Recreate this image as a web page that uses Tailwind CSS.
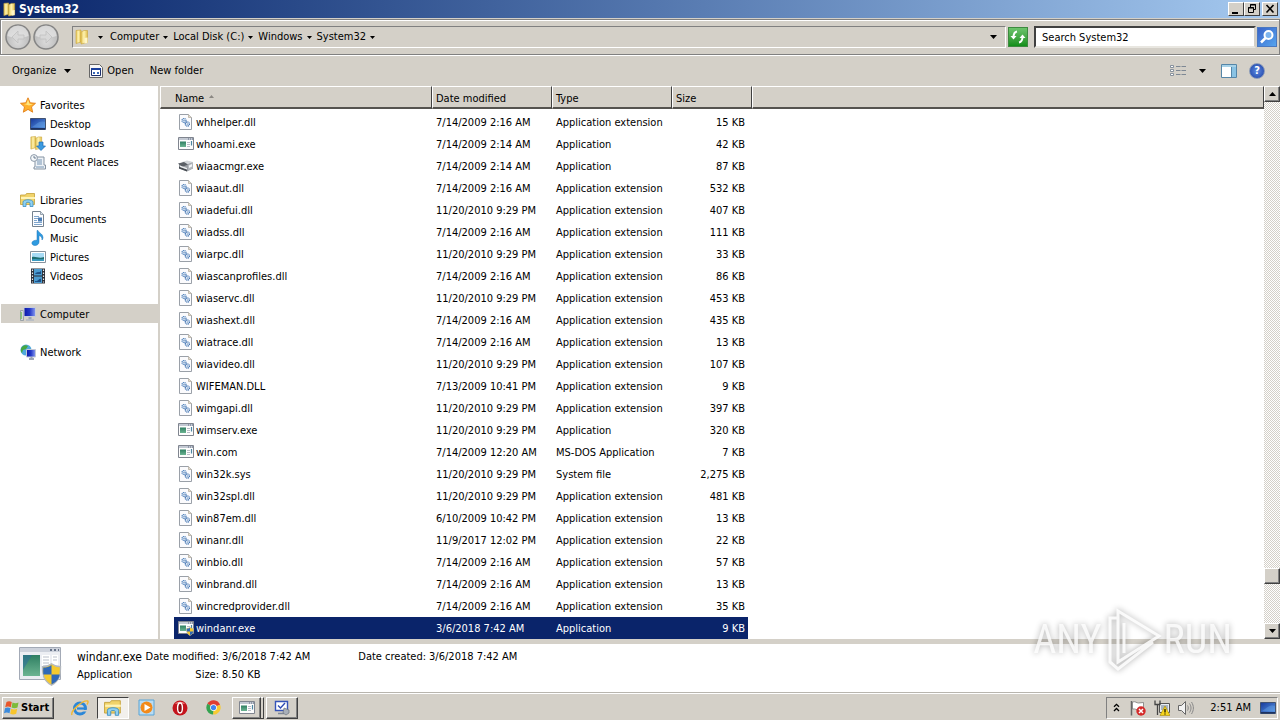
<!DOCTYPE html>
<html lang="en">
<head>
    <meta charset="UTF-8">
    <meta name="viewport" content="width=device-width, initial-scale=1.0">
    <title>System32</title>
    <script src="https://cdn.jsdelivr.net/npm/@tailwindcss/browser@4"></script>
</head>
<body class="h-screen flex flex-col overflow-hidden bg-[#d4d0c8] text-black text-[11px] leading-[14px] font-['DejaVu_Sans_Condensed','DejaVu_Sans',sans-serif]">

    <!-- Shared icons -->
    <svg class="absolute size-0" aria-hidden="true">
        <defs>
            <linearGradient id="g-folder" x1="0" x2="1" y1="0" y2="0"><stop offset="0" stop-color="#e3c355"/><stop offset=".45" stop-color="#fff3b0"/><stop offset="1" stop-color="#e2bf4c"/></linearGradient>
            <linearGradient id="g-blue" x1="0" x2="1" y1="0" y2="1"><stop offset="0" stop-color="#16389a"/><stop offset="1" stop-color="#5b9be6"/></linearGradient>
            <linearGradient id="g-navy" x1="0" x2="1" y1="0" y2="0"><stop offset="0" stop-color="#0a17a8"/><stop offset=".5" stop-color="#2338c8"/><stop offset="1" stop-color="#8a9cf0"/></linearGradient>
            <linearGradient id="g-green" x1="0" x2="0" y1="0" y2="1"><stop offset="0" stop-color="#2f7f62"/><stop offset="1" stop-color="#6cb492"/></linearGradient>
            <radialGradient id="g-round" cx=".5" cy=".7" r=".7"><stop offset="0" stop-color="#dcdcdc"/><stop offset="1" stop-color="#b0b0b0"/></radialGradient>
        </defs>
        <symbol id="arrow-down" viewBox="0 0 7 4"><path d="M0 0h7L3.500 4z" fill="currentColor"/></symbol>
        <symbol id="folder" viewBox="0 0 16 16">
            <path d="M2 1.500l5-.5v12l-5 1.500z" fill="url(#g-folder)" stroke="#c9a53b" stroke-width=".6"/>
            <path d="M7 3l3-1.500h3.500v12L7 15z" fill="url(#g-folder)" stroke="#c9a53b" stroke-width=".6"/>
            <path d="M10.500 9l3-.5V14l-3 .5z" fill="#fff6c8"/>
        </symbol>
        <symbol id="dll" viewBox="0 0 16 16">
            <path d="M1.500.5h9l3 3v12h-12z" fill="#fbfbfd" stroke="#9aa0a8"/>
            <path d="M10.500.5v3h3" fill="#e4dccb" stroke="#b0a898" stroke-width=".7"/>
            <circle cx="6" cy="6.500" r="2" fill="#e5effa" stroke="#4a7db8" stroke-width="1.200" stroke-dasharray="1 .5"/>
            <circle cx="9.300" cy="10" r="2.100" fill="#e5effa" stroke="#3d6fae" stroke-width="1.200" stroke-dasharray="1 .5"/>
            <circle cx="6" cy="6.500" r=".6" fill="#3b68a0"/><circle cx="9.300" cy="10" r=".6" fill="#3b68a0"/>
        </symbol>
        <symbol id="exe" viewBox="0 0 16 16">
            <path d="M.5 1.500h15v12H.5z" fill="#fdfdfd" stroke="#80858f"/>
            <path d="M1 2h14v2H1z" fill="#c3c9d3"/>
            <path d="M10 2.500h1v1h-1zm2 0h1v1h-1zm2 0h1v1h-1z" fill="#5f6a80"/>
            <path d="M2 5.500h6v5.500H2z" fill="url(#g-green)"/>
            <path d="M9 6.500h3M9 8.500h3M9 10.500h3" stroke="#b7bcc5"/>
            <path d="M13.500 5v4.500" stroke="#4c86a2" stroke-width="1.200"/>
        </symbol>
        <symbol id="shield" viewBox="0 0 12 14">
            <path d="M6 .5C8 2 9.500 2.300 11.500 2.300 11.500 8 10.500 11 6 13.500 1.500 11 .5 8 .5 2.300 2.500 2.300 4 2 6 .5z" fill="#f5c92e" stroke="#b3b8bf" stroke-width=".8"/>
            <path d="M6 1.200V7H1C.9 5.500.9 4 1 2.800 3 2.800 4.500 2.300 6 1.200zM6 7h5C10.500 10 9 11.500 6 13z" fill="#2f68b7"/>
        </symbol>
        <symbol id="exe-shield" viewBox="0 0 16 16"><use href="#exe" width="16" height="16"/><use href="#shield" x="8" y="7" width="8" height="9"/></symbol>
        <symbol id="scanner" viewBox="0 0 16 16">
            <path d="M1 6l8-3 6 1.500v6L9 13.500 1 10.500z" fill="#9a9ea4"/>
            <path d="M4 4l5-1.500 6 1.500-6 2.500z" fill="#d3d6da"/>
            <path d="M0 5.500L6 4l4 2.500L4 9z" fill="#5b6066"/>
            <path d="M1 8.500l8 3v2l-8-3z" fill="#474c52"/>
            <path d="M2 7.500l7 2.500v1.500L2 9z" fill="#eceef0"/>
            <path d="M10 7l5-2.500v5.500l-5 3z" fill="#b2b7bc"/><path d="M11 7.500l3-1.500v2.500l-3 1.500z" fill="#f3f5f7"/>
        </symbol>
        <symbol id="star" viewBox="0 0 16 16"><path d="M8 .8l2.200 5 5.300.5-4 3.600 1.200 5.300L8 12.400l-4.700 2.800 1.200-5.300-4-3.600 5.300-.5z" fill="#ffb02c" stroke="#e2801c" stroke-width=".9"/><path d="M8 2.500l1.500 4.200 3.500.5-4 1.300-5-1.500 2.500-.3z" fill="#ffe680"/></symbol>
        <symbol id="desktop" viewBox="0 0 16 16"><path d="M.5 2.500h15v11H.5z" fill="url(#g-blue)" stroke="#415272"/><path d="M1 12h14v1.500H1z" fill="#1d3261"/><path d="M5 9c4-4 8-4 10-3v5H2z" fill="#6fb0ee" opacity=".35"/></symbol>
        <symbol id="downloads" viewBox="0 0 16 16"><use href="#folder" x="-1" width="15" height="16"/><path d="M9 7h4v4h2.500L11 15.500 6.500 11H9z" fill="#3b9ae0" stroke="#1e6cb3" stroke-width=".7"/></symbol>
        <symbol id="recent" viewBox="0 0 16 16">
            <path d="M5 3h9v8h1.500v4H4v-2h1z" fill="#eef2f6" stroke="#8593a2"/>
            <path d="M7 6h5M7 8h5M7 10h5M6 13h8" stroke="#7695b4"/>
            <circle cx="4" cy="4" r="3.400" fill="#f5f8fa" stroke="#8c99a8"/><path d="M4 2v2h2" stroke="#4d6178" fill="none" stroke-width=".8"/>
        </symbol>
        <symbol id="libraries" viewBox="0 0 16 16">
            <path d="M.5 3h5l1-1.500h8v11H.5z" fill="#f1d36a" stroke="#c39f37" stroke-width=".8"/>
            <path d="M1 5h14v2H1z" fill="#fff3b5"/>
            <path d="M3 14.500V10c0-3 10-3 10 0v4.500h-3V11c0-1-4-1-4 0v3.500z" fill="#8fd0f0" stroke="#3c8fc4" stroke-width=".8"/>
        </symbol>
        <symbol id="document" viewBox="0 0 16 16"><path d="M2.500.5h8l3 3v12h-11z" fill="#fcfdff" stroke="#75828f"/><path d="M10.500.5v3h3" fill="#d9e3ee" stroke="#75828f" stroke-width=".7"/><path d="M4 5.500h5M4 7.500h4M4 9.500h3M4 11.500h8M4 13.500h8" stroke="#7fa5cc"/><path d="M8 6.500h4v4H8z" fill="#4a7cb5"/></symbol>
        <symbol id="music" viewBox="0 0 16 16"><path d="M8 .5c1 3 5 3 5 7 0 1-.5 2-1 2.500.3-3-1.500-4-3-4.500V12c0 2-1.800 3.500-4 3.500S1.500 14 2 12.500 4.500 10 7 10.300V.5z" fill="#2f9be0" stroke="#1872b8" stroke-width=".5"/></symbol>
        <symbol id="pictures" viewBox="0 0 16 16"><path d="M.5 2.500h15v11H.5z" fill="#fff" stroke="#87929d"/><path d="M2 4h12v8H2z" fill="#a7dbf5"/><path d="M2 8c4-1 7 2 12 0v4H2z" fill="#1e6f72"/><path d="M2 10.500c4-1.500 8 .5 12-.5v2H2z" fill="#3b9bc0"/></symbol>
        <symbol id="videos" viewBox="0 0 16 16"><path d="M1 .5h14v15H1z" fill="#2a2e36"/><path d="M4 1h8v6.500H4zM4 8.500h8V15H4z" fill="#4a9bd0"/><path d="M5 6c2-3 4-1 6-3v3zM5 13c3 1 4-3 6-2v3H5z" fill="#1d4f85"/><path d="M2.500 1.500v13M13.500 1.500v13" stroke="#e9ecef" stroke-width="1.200" stroke-dasharray="1.500 1.500"/></symbol>
        <symbol id="computer" viewBox="0 0 16 16"><path d="M.5 4.500h3v10h-3z" fill="#cfd5da" stroke="#8b949c" stroke-width=".8"/><path d="M1.200 6v7" stroke="#6cbf4c"/><path d="M4 1.500h11.500v9H4z" fill="url(#g-navy)" stroke="#c7cdd8"/><path d="M8.500 11h3v2.500h-3z" fill="#9ba4b4"/><path d="M6 14h8" stroke="#b0b8c4" stroke-width="1.500"/></symbol>
        <symbol id="network" viewBox="0 0 16 16"><circle cx="6" cy="6" r="5.500" fill="#4fa9dd"/><path d="M2 3c2-2 4-2 6-1L6 5 3 6 2 9C0 7 1 4 2 3zM6 7l3 1-2 3z" fill="#47a842"/><path d="M6.500 5.500h9v7.500h-9z" fill="url(#g-navy)" stroke="#c2c9d6"/><path d="M9 15h5" stroke="#7f8ba0" stroke-width="1.500"/><path d="M11.500 13v2" stroke="#9ba4b4" stroke-width="2"/></symbol>
    </svg>

    <!-- Title bar -->
    <header class="h-[18px] shrink-0 flex items-center gap-[2px] pl-[2px] pr-[2px] bg-linear-to-r from-[#0a246a] to-[#a6caf0]">
        <svg class="size-[15px]"><use href="#folder"/></svg>
        <h1 class="grow font-bold text-[12px] text-white">System32</h1>
        <div class="flex">
            <button aria-label="Minimize" class="w-4 h-[14px] bg-[#d4d0c8] border border-t-white border-l-white border-r-[#404040] border-b-[#404040]">
                <svg class="size-full" viewBox="0 0 14 12"><path d="M3 9h6v2H3z"/></svg>
            </button>
            <button aria-label="Restore" class="w-4 h-[14px] bg-[#d4d0c8] border border-t-white border-l-white border-r-[#404040] border-b-[#404040]">
                <svg class="size-full" viewBox="0 0 14 12" fill="none" stroke="#000"><path d="M5.500 4V1.500h5v5H9M5 2h6M3.500 4.500h5v5h-5zM3 5h6"/></svg>
            </button>
            <button aria-label="Close" class="ml-[2px] w-4 h-[14px] bg-[#d4d0c8] border border-t-white border-l-white border-r-[#404040] border-b-[#404040]">
                <svg class="size-full" viewBox="0 0 14 12" stroke="#000" stroke-width="1.600"><path d="M3.500 2l7 7.500M10.500 2l-7 7.500"/></svg>
            </button>
        </div>
    </header>

    <!-- Address bar -->
    <div class="h-9 shrink-0 mt-px flex items-center pl-1 pr-[2px] border border-[#808080] shadow-[inset_1px_1px_0_#fff,0_1px_0_#fff]">
        <nav class="flex items-center gap-[2px] mr-[13px]" aria-label="History">
            <button aria-label="Back">
                <svg class="size-[26px]" viewBox="0 0 26 26"><circle cx="13" cy="13" r="12" fill="url(#g-round)" stroke="#858585" stroke-width="1.500"/><path d="M2.500 12a10.500 10.500 0 0 1 21 0c-6 2-15 2-21 0z" fill="#eee" opacity=".6"/><path d="M13 7l-6 6 6 6v-4h6v-4h-6z" fill="#d8d8d8" stroke="#c0c0c0" stroke-width=".8"/></svg>
            </button>
            <button aria-label="Forward">
                <svg class="size-[26px]" viewBox="0 0 26 26"><circle cx="13" cy="13" r="12" fill="url(#g-round)" stroke="#858585" stroke-width="1.500"/><path d="M2.500 12a10.500 10.500 0 0 1 21 0c-6 2-15 2-21 0z" fill="#eee" opacity=".6"/><path d="M13 7l6 6-6 6v-4H7v-4h6z" fill="#d8d8d8" stroke="#c0c0c0" stroke-width=".8"/></svg>
            </button>
        </nav>
        <div class="grow h-[22px] flex items-center border border-t-[#808080] border-l-[#808080] border-b-white border-r-white">
            <svg class="size-4 ml-px"><use href="#folder"/></svg>
            <button aria-label="Locations" class="ml-2 mr-[7px]"><svg class="w-[5px] h-[3px]"><use href="#arrow-down"/></svg></button>
            <nav class="flex gap-[5px]" aria-label="Path">
                <a href="#" class="flex items-center gap-1">Computer <svg class="w-[5px] h-[3px]"><use href="#arrow-down"/></svg></a>
                <a href="#" class="flex items-center gap-1">Local Disk (C:) <svg class="w-[5px] h-[3px]"><use href="#arrow-down"/></svg></a>
                <a href="#" class="flex items-center gap-1">Windows <svg class="w-[5px] h-[3px]"><use href="#arrow-down"/></svg></a>
                <a href="#" class="flex items-center gap-1">System32 <svg class="w-[5px] h-[3px]"><use href="#arrow-down"/></svg></a>
            </nav>
            <button aria-label="Previous locations" class="ml-auto mr-2"><svg class="w-[7px] h-1"><use href="#arrow-down"/></svg></button>
        </div>
        <button aria-label="Refresh" class="mx-[2px] w-5 h-5 bg-linear-to-b from-[#6cc46c] to-[#0f8f18] border border-[#3d8a3f]">
            <svg class="size-full" viewBox="0 0 18 18" fill="none" stroke="#fff" stroke-width="2"><path d="M8 3.500C5 4 4.500 6 4.500 9.500M10 14.500c3-.5 3.500-2.500 3.500-6"/><path d="M1.500 8h6L4.500 11.500zM10.500 10h6l-3-3.500z" fill="#fff" stroke="none"/></svg>
        </button>
        <form class="flex items-center ml-1 gap-px">
            <input type="text" aria-label="Search" value="Search System32" class="w-[222px] h-[22px] px-[6px] bg-white border-2 border-t-[#404040] border-l-[#404040] border-b-[#e8e6e0] border-r-[#d4d0c8] outline-none">
            <button type="button" aria-label="Start search" class="w-5 h-5 bg-linear-to-br from-[#3a63c8] to-[#56a4ee] border border-[#4a78c0]">
                <svg class="size-full" viewBox="0 0 18 18" fill="none" stroke="#fff"><circle cx="10.500" cy="7" r="4" stroke-width="2" fill="#7db4ee"/><path d="M7.500 10L3 14.500" stroke-width="2.500"/></svg>
            </button>
        </form>
    </div>

    <!-- Command bar -->
    <div class="h-[31px] shrink-0 flex items-center pl-3 pr-[15px]">
        <button class="flex items-center gap-2">Organize <svg class="w-[7px] h-1"><use href="#arrow-down"/></svg></button>
        <button class="ml-[18px] flex items-center gap-1">
            <svg class="size-[14px]" viewBox="0 0 14 14"><path d="M.5.500h10l3 3v10H.5z" fill="#f7f7f7" stroke="#666"/><path d="M2.500 4.500h9v7h-9z" fill="#fff" stroke="#1b2f6d"/><path d="M2 4h10v2H2z" fill="#1b3f9c"/><path d="M4 8h2v2H4zm4 0h2v2H8z" fill="#3868b8"/></svg>
            Open
        </button>
        <button class="ml-4">New folder</button>
        <button aria-label="Change view" class="ml-auto">
            <svg class="w-4 h-3" viewBox="0 0 16 12"><path d="M.5.500h3v2h-3zM.5 4.500h3v2h-3zM.5 8.500h3v2h-3z" fill="#fff" stroke="#7c8794" stroke-width=".9"/><path d="M6 1.500h4.500M11.500 1.500H16M6 5.500h4.500M11.500 5.500H16M6 9.500h4.500M11.500 9.500H16" stroke="#7e8894"/></svg>
        </button>
        <button aria-label="View options" class="ml-[13px]"><svg class="w-[7px] h-1"><use href="#arrow-down"/></svg></button>
        <button aria-label="Preview pane" class="ml-[15px]">
            <svg class="w-4 h-[14px]" viewBox="0 0 16 14"><path d="M.5.500h15v13H.5z" fill="#fff" stroke="#5586a8"/><path d="M1 1h14v2H1z" fill="#a7d2e8"/><path d="M10.500 3v10" stroke="#5586a8"/><path d="M11 3h4v10h-4z" fill="#8ac3e4"/></svg>
        </button>
        <button aria-label="Help" class="ml-3 size-4 rounded-full bg-radial from-[#5f8ae0] to-[#1c3ea4] border border-[#8a9ab8] text-white font-bold">?</button>
    </div>

    <div class="grow min-h-0 flex">
        <!-- Navigation pane -->
        <aside class="w-[158px] shrink-0 bg-white pt-[9px] pl-px">
            <ul class="flex flex-col gap-[19px] [&_span]:pt-[2px]">
                <li>
                    <a href="#" class="h-[19px] flex items-center gap-1 pl-[19px]"><svg class="size-4"><use href="#star"/></svg><span>Favorites</span></a>
                    <a href="#" class="h-[19px] flex items-center gap-1 pl-[29px]"><svg class="size-4"><use href="#desktop"/></svg><span>Desktop</span></a>
                    <a href="#" class="h-[19px] flex items-center gap-1 pl-[29px]"><svg class="size-4"><use href="#downloads"/></svg><span>Downloads</span></a>
                    <a href="#" class="h-[19px] flex items-center gap-1 pl-[29px]"><svg class="size-4"><use href="#recent"/></svg><span>Recent Places</span></a>
                </li>
                <li>
                    <a href="#" class="h-[19px] flex items-center gap-1 pl-[19px]"><svg class="size-4"><use href="#libraries"/></svg><span>Libraries</span></a>
                    <a href="#" class="h-[19px] flex items-center gap-1 pl-[29px]"><svg class="size-4"><use href="#document"/></svg><span>Documents</span></a>
                    <a href="#" class="h-[19px] flex items-center gap-1 pl-[29px]"><svg class="size-4"><use href="#music"/></svg><span>Music</span></a>
                    <a href="#" class="h-[19px] flex items-center gap-1 pl-[29px]"><svg class="size-4"><use href="#pictures"/></svg><span>Pictures</span></a>
                    <a href="#" class="h-[19px] flex items-center gap-1 pl-[29px]"><svg class="size-4"><use href="#videos"/></svg><span>Videos</span></a>
                </li>
                <li><a href="#" class="h-[19px] flex items-center gap-1 pl-[19px] bg-[#d4d0c8]"><svg class="size-4"><use href="#computer"/></svg><span>Computer</span></a></li>
                <li><a href="#" class="h-[19px] flex items-center gap-1 pl-[19px]"><svg class="size-4"><use href="#network"/></svg><span>Network</span></a></li>
            </ul>
        </aside>

        <!-- File list -->
        <main class="grow min-w-0 ml-[2px] bg-white overflow-hidden">
            <table class="w-full table-fixed border-separate border-spacing-0">
                <thead>
                    <tr class="h-[23px] text-left bg-[#d4d0c8] *:font-normal *:p-0 *:pt-[3px] *:border-t *:border-l *:border-b-2 *:border-t-white *:border-l-white *:border-b-[#55534f]">
                        <th class="w-[272px] border-r border-r-[#404040]"><span class="flex items-center gap-[5px] pl-[14px]">Name <svg class="w-[5px] h-[3px] mb-1" viewBox="0 0 5 3"><path d="M0 3h5L2.500 0z" fill="#8a8782"/></svg></span></th>
                        <th class="w-[120px] border-r border-r-[#404040]"><span class="pl-[3px]">Date modified</span></th>
                        <th class="w-[120px] border-r border-r-[#404040]"><span class="pl-[3px]">Type</span></th>
                        <th class="w-[80px] border-r border-r-[#404040]"><span class="pl-[3px]">Size</span></th>
                        <td class="border-r border-r-[#404040]"></td>
                    </tr>
                    <tr class="h-[2px]"><td colspan="5" class="p-0"></td></tr>
                </thead>
                <tbody id="files"></tbody>
            </table>
        </main>

        <!-- Scrollbar -->
        <div class="w-4 shrink-0 flex flex-col bg-[repeating-conic-gradient(#fff_0_25%,#d4d0c8_0_50%)] bg-[length:2px_2px]">
            <button aria-label="Scroll up" class="h-4 grid place-items-center bg-[#d4d0c8] border border-t-white border-l-white border-r-[#404040] border-b-[#404040] shadow-[inset_-1px_-1px_0_#808080]"><svg class="w-[7px] h-1 rotate-180"><use href="#arrow-down"/></svg></button>
            <div class="grow-[466]"></div>
            <div class="h-4 bg-[#d4d0c8] border border-t-white border-l-white border-r-[#404040] border-b-[#404040] shadow-[inset_-1px_-1px_0_#808080]"></div>
            <div class="grow-[39]"></div>
            <button aria-label="Scroll down" class="h-4 grid place-items-center bg-[#d4d0c8] border border-t-white border-l-white border-r-[#404040] border-b-[#404040] shadow-[inset_-1px_-1px_0_#808080]"><svg class="w-[7px] h-1"><use href="#arrow-down"/></svg></button>
        </div>
    </div>

    <!-- Details pane -->
    <section class="h-[53px] shrink-0 flex border-t-[5px] border-[#d4d0c8] bg-white pl-[18px]">
        <svg class="w-11 h-11 mr-[15px] shrink-0" viewBox="0 0 44 44">
            <path d="M1.500 3.500h41v32h-41z" fill="#eceef3" stroke="#a3aab6"/>
            <path d="M2 4h40v4H2z" fill="#cdd2dc"/><path d="M32 6h2M36 6h2M40 6h1" stroke="#68748a" stroke-width="2"/>
            <path d="M5 11h17v21H5z" fill="url(#g-green)"/><path d="M5 11h9L5 26z" fill="#2b6b9c" opacity=".55"/>
            <path d="M24 11h8v21h-8zM34 11h6v21h-6z" fill="#fff"/><path d="M25 13h6M25 16h6M25 19h6M25 22h6M35 13h4M35 16h4" stroke="#b9bfca"/>
            <use href="#shield" x="23" y="19" width="21" height="23"/>
        </svg>
        <div class="grid grid-cols-[65px_74px_auto_auto_auto] auto-rows-[18px] gap-x-[3px] content-start items-center pt-1 whitespace-nowrap">
            <span class="text-[12px]">windanr.exe</span>
            <span class="text-right">Date modified:</span>
            <span class="pr-[45px]">3/6/2018 7:42 AM</span>
            <span>Date created:</span>
            <span>3/6/2018 7:42 AM</span>
            <span>Application</span>
            <span class="text-right">Size:</span>
            <span>8.50 KB</span>
        </div>
    </section>

    <!-- Taskbar -->
    <footer class="h-7 shrink-0 flex items-center pl-[2px] pr-[2px] border-t border-[#b8b5ae] shadow-[inset_0_1px_0_#fff]">
        <button class="w-[52px] h-[22px] mt-[2px] flex items-center pl-px gap-px font-bold border border-t-white border-l-white border-r-[#404040] border-b-[#404040] shadow-[inset_-1px_-1px_0_#808080]">
            <svg class="size-4" viewBox="0 0 16 16"><path d="M2.500 2C4 1 6 1 7.800 2L6.800 7.300C5 6.300 3 6.300 1.200 7.300z" fill="#e8562a"/><path d="M8.500 2.500c2 1 4 1 6 0l-1 5c-2 1-4 1-6 0z" fill="#7dbb3a"/><path d="M1 8.300c1.700-1 3.700-1 5.500 0l-1 5c-1.700-1-3.700-1-5.500 0z" fill="#3c8bdc"/><path d="M7.200 8.700c1.700 1 3.800 1 6 0l-1 5c-2 1-4 1-6 0z" fill="#f8c52b"/></svg>
            Start
        </button>
        <nav class="flex items-center pl-[17px] pt-[2px]" aria-label="Taskbar">
            <button aria-label="Internet Explorer"><svg class="size-[18px]" viewBox="0 0 18 18" fill="none"><circle cx="9" cy="9.500" r="5.500" stroke="#2b87d8" stroke-width="3"/><path d="M6 9.500h8" stroke="#2b87d8" stroke-width="2.200"/><path d="M11 11h6v1.500h-5z" fill="#d4d0c8"/><path d="M1 16C-1 12 12 1 16.500 2c1 .5.500 2-.5 3.500" stroke="#f0b832" stroke-width="1.400"/></svg></button>
            <button aria-label="Windows Explorer" class="ml-2 w-8 h-[22px] grid place-items-center bg-[#f2f0ec] border border-t-[#404040] border-l-[#404040] border-b-white border-r-white"><svg class="size-[18px]"><use href="#libraries"/></svg></button>
            <button aria-label="Media Player" class="ml-[9px]"><svg class="size-[17px]" viewBox="0 0 17 17"><path d="M1 1h15v15H1z" fill="#b9dcf3" stroke="#58a4d6"/><circle cx="8.500" cy="8.500" r="6" fill="#f28a1a"/><path d="M6.500 5l6 3.500-6 3.500z" fill="#fff"/></svg></button>
            <button aria-label="Opera" class="ml-[17px]"><svg class="size-4" viewBox="0 0 16 16"><circle cx="8" cy="8" r="7.500" fill="#c4141c"/><path d="M3 4c2-3 8-3 10 0-3-1-7-1-10 0z" fill="#f08a8a"/><ellipse cx="8" cy="8" rx="2.400" ry="5" fill="#8c0a10" stroke="#fff" stroke-width="1.400"/></svg></button>
            <button aria-label="Chrome" class="ml-[18px]"><svg class="size-[15px]" viewBox="0 0 16 16"><path d="M8 8L1.500 4A7.500 7.500 0 0 1 15 5z" fill="#df3d32"/><path d="M8 8l7-3a7.500 7.500 0 0 1-7.500 10.500z" fill="#f8cb33"/><path d="M8 8l-.5 7.500A7.500 7.500 0 0 1 1.500 4z" fill="#35a350"/><circle cx="8" cy="8" r="3.600" fill="#fff"/><circle cx="8" cy="8" r="2.800" fill="#4384f0"/></svg></button>
            <button aria-label="Application" class="ml-[11px] w-[29px] h-[22px] grid place-items-center border border-t-white border-l-white border-r-[#404040] border-b-[#404040] shadow-[inset_-1px_-1px_0_#808080]"><svg class="size-4"><use href="#exe"/></svg></button>
            <span class="w-[3px] h-[22px] border border-l-0 border-t-white border-r-[#404040] border-b-[#404040]"></span>
            <button aria-label="System settings" class="ml-[2px] w-8 h-[22px] grid place-items-center border border-t-white border-l-white border-r-[#404040] border-b-[#404040] shadow-[inset_-1px_-1px_0_#808080]"><svg class="size-4" viewBox="0 0 16 16"><path d="M1.500 1.500h12v9h-12z" fill="#fff" stroke="#3553b8" stroke-width="1.400"/><path d="M4 5.500l2.500 2.500L11 3" fill="none" stroke="#2d4bb4" stroke-width="1.400"/><path d="M4 13.500h6" stroke="#7d8796" stroke-width="1.500"/><path d="M10 8l5 2v3l-3 2-3-2z" fill="#a9afb8" stroke="#6c737d" stroke-width=".7"/></svg></button>
        </nav>
        <div class="ml-auto mt-[2px] h-[22px] flex items-center pl-[6px] pr-px border border-t-[#808080] border-l-[#808080] border-b-white border-r-white">
            <button aria-label="Show hidden icons"><svg class="w-[7px] h-[9px]" viewBox="0 0 7 9" fill="none" stroke="#000" stroke-width="1.300"><path d="M1 3.800l2.500-2.500L6 3.800M1 8l2.500-2.500L6 8"/></svg></button>
            <svg class="size-4 ml-[10px]" viewBox="0 0 16 16"><path d="M1.500 1v14.500" stroke="#666" stroke-width="1.500"/><path d="M2.500 2c3-1 4 1 6 1s3-.5 5-.5v7c-2 0-3 .5-5 .5s-3-1.500-6-1z" fill="#fff" stroke="#777" stroke-width=".8"/><circle cx="11" cy="11" r="4.700" fill="#d42a2a"/><path d="M9 9l4 4M13 9l-4 4" stroke="#fff" stroke-width="1.500"/></svg>
            <svg class="size-4 ml-2" viewBox="0 0 16 16"><path d="M5.500 3.500h10v9h-10z" fill="#e8edf2" stroke="#555"/><path d="M1 .5v4h5v-4M3.500 4.500V15" fill="none" stroke="#444" stroke-width="1.300"/><path d="M7 5h7v5H7z" fill="#a9b4c0"/><path d="M11 6l5 9.500H6z" fill="#f7d51d" stroke="#a88a00" stroke-width=".6"/><path d="M11 9v3.500M11 13.500v1" stroke="#000" stroke-width="1.200"/></svg>
            <svg class="size-4 ml-2" viewBox="0 0 16 16" fill="none" stroke="#666"><path d="M.5 5.500h3l4-4v13l-4-4h-3z" fill="#f2f2f2"/><path d="M9.500 5.500c1 1.500 1 3.500 0 5M11.500 3.500c2 3 2 6 0 9M13.500 2c2.500 4 2.500 8 0 12" stroke="#888"/></svg>
            <time class="ml-4">2:51 AM</time>
            <button aria-label="Show desktop" class="ml-[9px]"><svg class="size-4"><use href="#desktop"/></svg></button>
        </div>
    </footer>

    <!-- Watermark -->
    <div class="absolute right-[48px] bottom-[48px] flex items-center gap-[2px] text-white/80 text-[40px] leading-[64px] pointer-events-none drop-shadow-[0_0_3px_rgb(0_0_0/0.4)] font-['Roboto_Condensed','Open_Sans_Condensed','Liberation_Sans',sans-serif]">
        <span>ANY</span>
        <svg class="w-[58px] h-[64px]" viewBox="0 0 58 64" fill="none" stroke="#fff" stroke-width="3" stroke-opacity=".85"><path d="M14 3l41 25-41 26zM14 10H6v44l8 7 35-27M20 15v30"/></svg>
        <span>RUN</span>
    </div>

    <script>
        const DLL = 'Application extension';
        const files = [
            ['dll', 'whhelper.dll', '7/14/2009 2:16 AM', DLL, '15 KB'],
            ['exe', 'whoami.exe', '7/14/2009 2:14 AM', 'Application', '42 KB'],
            ['scanner', 'wiaacmgr.exe', '7/14/2009 2:14 AM', 'Application', '87 KB'],
            ['dll', 'wiaaut.dll', '7/14/2009 2:16 AM', DLL, '532 KB'],
            ['dll', 'wiadefui.dll', '11/20/2010 9:29 PM', DLL, '407 KB'],
            ['dll', 'wiadss.dll', '7/14/2009 2:16 AM', DLL, '111 KB'],
            ['dll', 'wiarpc.dll', '11/20/2010 9:29 PM', DLL, '33 KB'],
            ['dll', 'wiascanprofiles.dll', '7/14/2009 2:16 AM', DLL, '86 KB'],
            ['dll', 'wiaservc.dll', '11/20/2010 9:29 PM', DLL, '453 KB'],
            ['dll', 'wiashext.dll', '7/14/2009 2:16 AM', DLL, '435 KB'],
            ['dll', 'wiatrace.dll', '7/14/2009 2:16 AM', DLL, '13 KB'],
            ['dll', 'wiavideo.dll', '11/20/2010 9:29 PM', DLL, '107 KB'],
            ['dll', 'WIFEMAN.DLL', '7/13/2009 10:41 PM', DLL, '9 KB'],
            ['dll', 'wimgapi.dll', '11/20/2010 9:29 PM', DLL, '397 KB'],
            ['exe', 'wimserv.exe', '11/20/2010 9:29 PM', 'Application', '320 KB'],
            ['exe', 'win.com', '7/14/2009 12:20 AM', 'MS-DOS Application', '7 KB'],
            ['dll', 'win32k.sys', '11/20/2010 9:29 PM', 'System file', '2,275 KB'],
            ['dll', 'win32spl.dll', '11/20/2010 9:29 PM', DLL, '481 KB'],
            ['dll', 'win87em.dll', '6/10/2009 10:42 PM', DLL, '13 KB'],
            ['dll', 'winanr.dll', '11/9/2017 12:02 PM', DLL, '22 KB'],
            ['dll', 'winbio.dll', '7/14/2009 2:16 AM', DLL, '57 KB'],
            ['dll', 'winbrand.dll', '7/14/2009 2:16 AM', DLL, '13 KB'],
            ['dll', 'wincredprovider.dll', '7/14/2009 2:16 AM', DLL, '35 KB'],
            ['exe-shield', 'windanr.exe', '3/6/2018 7:42 AM', 'Application', '9 KB']
        ];

        // Last file is the selected one
        document.getElementById('files').innerHTML = files.map(([icon, name, date, type, size], i) => {
            const row = i === files.length - 1 ? 'text-white *:*:bg-[#0a246a]' : '';
            return `
                <tr class="${row}">
                    <td class="p-0 pl-[14px]"><div class="h-[22px] flex gap-[2px] pl-1 leading-[24px]"><svg class="size-4 mt-[3px]"><use href="#${icon}"/></svg>${name}</div></td>
                    <td class="p-0"><div class="h-[22px] pl-1 leading-[24px]">${date}</div></td>
                    <td class="p-0"><div class="h-[22px] pl-1 leading-[24px]">${type}</div></td>
                    <td class="p-0 pr-1"><div class="h-[22px] pr-[3px] leading-[24px] text-right">${size}</div></td>
                    <td class="p-0"></td>
                </tr>`;
        }).join('');
    </script>
</body>
</html>
